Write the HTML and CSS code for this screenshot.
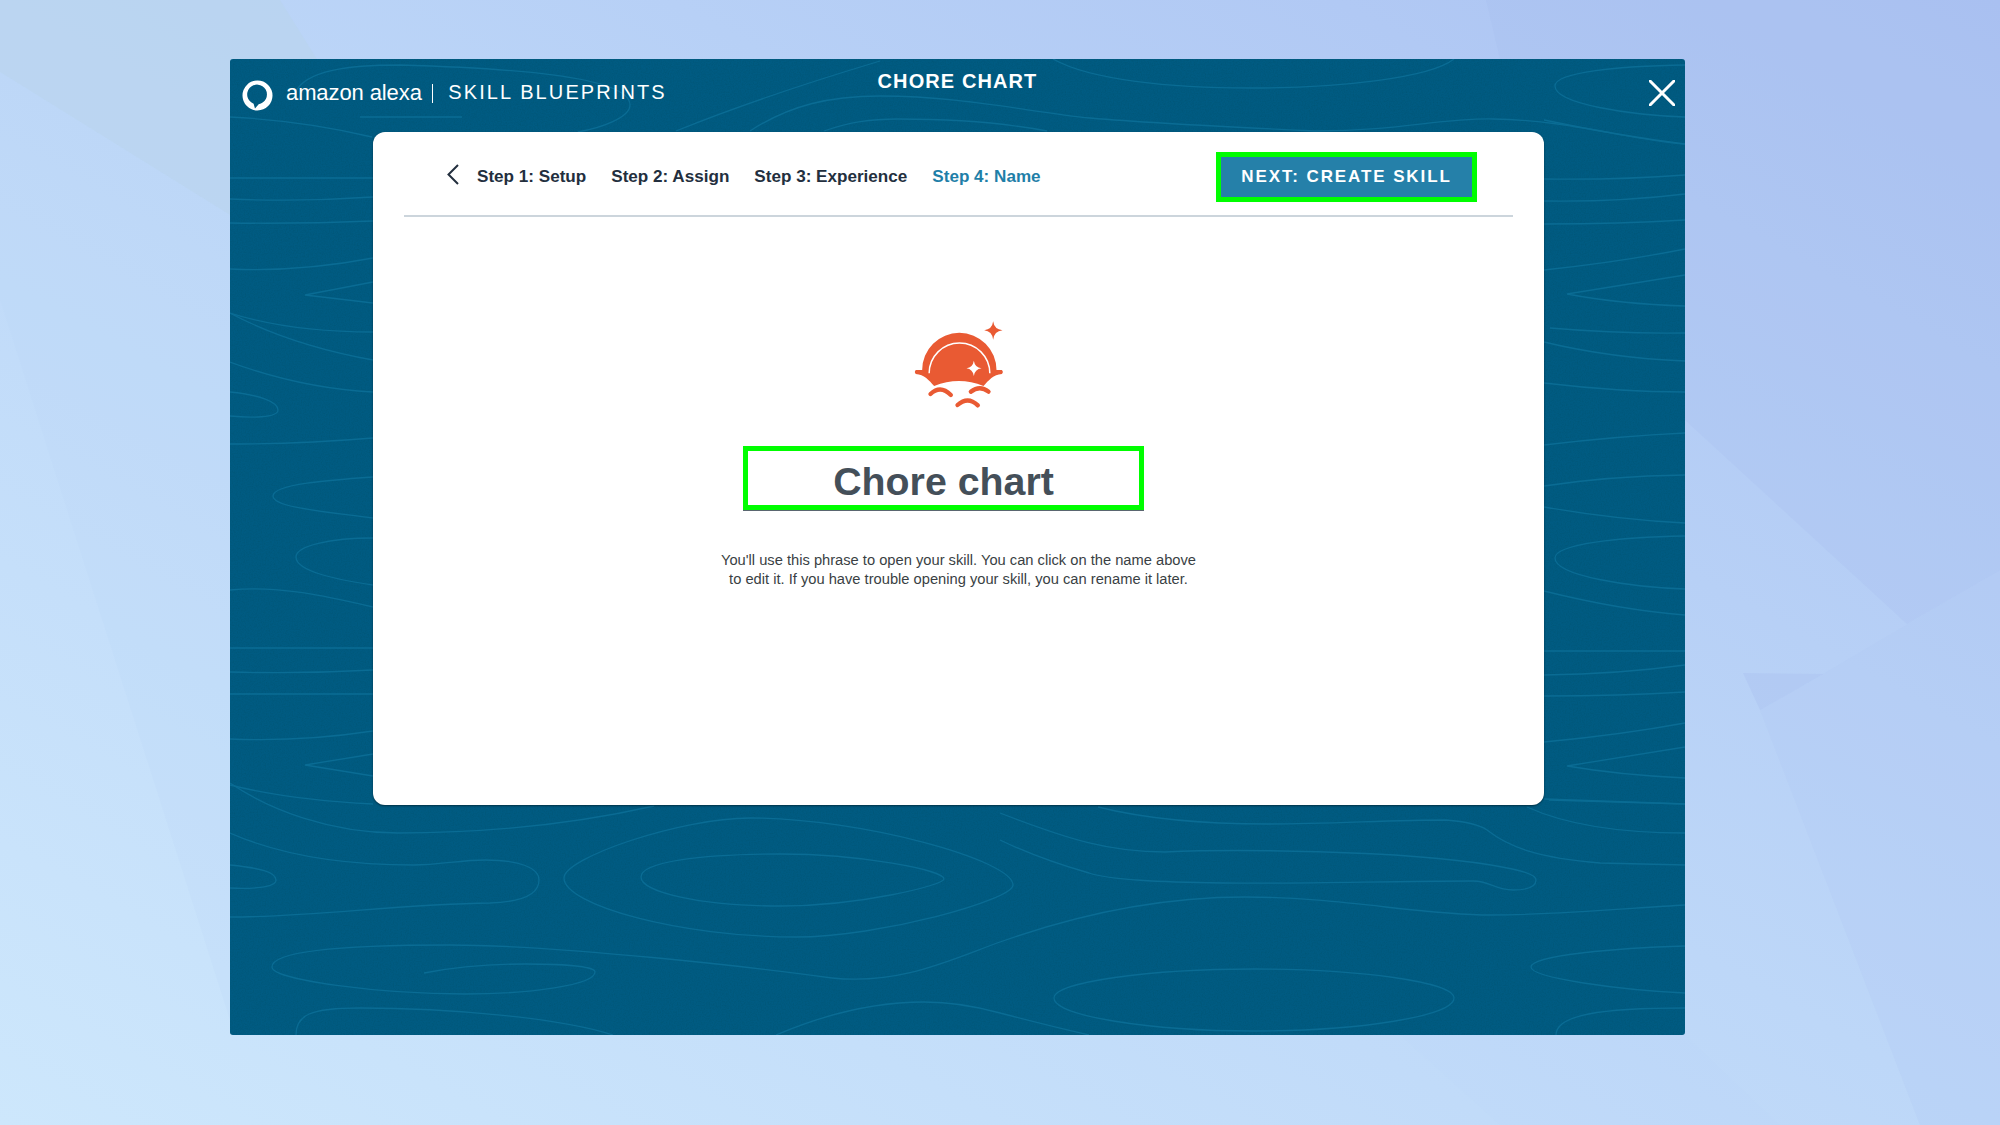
FILE: index.html
```html
<!DOCTYPE html>
<html lang="en">
<head>
    <meta charset="UTF-8">
    <title>Chore Chart - Skill Blueprints</title>
    <link rel="stylesheet" href="styles.css">
</head>
<body>
    <!-- Desktop wallpaper -->
    <svg class="wallpaper" viewBox="0 0 2000 1125" aria-hidden="true">
        <defs>
            <linearGradient id="wallGrad" x1="0" y1="1" x2="1" y2="0">
                <stop offset="0" stop-color="#cde7fc"/>
                <stop offset="0.5" stop-color="#bdd7f8"/>
                <stop offset="1" stop-color="#abc2f2"/>
            </linearGradient>
        </defs>
        <rect width="2000" height="1125" fill="url(#wallGrad)"/>
        <polygon points="0,0 280,0 330,80 300,260 230,215 0,72" fill="#b9d4ec" opacity="0.6"/>
        <polygon points="0,72 230,215 230,1020 0,300" fill="#bcd8f4" opacity="0.22"/>
        <polygon points="1486,0 1500,59 1685,420 1907,624 2000,570 2000,0" fill="#a4bcef" opacity="0.22"/>
        <polygon points="1760,710 1920,1125 2000,1125 2000,570 1823,674" fill="#b0c8f5" opacity="0.25"/>
        <polygon points="1743,673 1823,674 1760,710" fill="#a9c1f1" opacity="0.4"/>
        <polygon points="1680,1030 1780,1125 1500,1125 1400,1035" fill="#bbd4f9" opacity="0.15"/>
    </svg>

    <div class="window">
        <!-- Contour line pattern behind the content -->
        <svg class="contours" viewBox="230 59 1455 976" aria-hidden="true">
            <defs>
                <filter id="grain" x="0" y="0" width="100%" height="100%">
                    <feTurbulence type="fractalNoise" baseFrequency="0.75" numOctaves="2" seed="4"/>
                    <feColorMatrix values="0 0 0 0 0  0 0 0 0 0.08  0 0 0 0 0.14  1.4 0 0 0 -0.55"/>
                </filter>
            </defs>
            <rect x="230" y="59" width="1455" height="976" filter="url(#grain)" opacity="0.5"/>
            <g class="lines">
                <!-- top band -->
                <path d="M295 93 C305 70 350 65 400 65 C500 68 630 75 630 105 C630 118 600 128 578 132"/>
                <path d="M230 117 C290 120 335 128 372 137"/>
                <path d="M360 117 H462"/>
                <path d="M676 131 C740 105 800 85 880 61"/>
                <path d="M750 131 C790 105 830 96 880 96 C960 96 1030 112 1090 118 C1160 124 1250 128 1316 131 C1400 131 1440 118 1493 119 C1570 120 1630 140 1685 144"/>
                <path d="M824 131 C850 122 870 119 898 119 C960 119 1010 124 1047 131"/>
                <path d="M1053 59 C1090 80 1170 88 1251 88 C1340 88 1430 78 1454 59"/>
                <!-- left strip -->
                <path d="M230 178 H373"/>
                <path d="M230 199 Q300 202 373 197"/>
                <path d="M230 223 Q300 224 373 221"/>
                <path d="M230 269 Q300 272 373 258"/>
                <path d="M373 282 L305 295 L373 303"/>
                <path d="M230 313 Q290 332 373 332"/>
                <path d="M230 313 Q290 345 373 360"/>
                <path d="M230 362 Q300 388 373 392"/>
                <path d="M230 392 C260 395 278 402 278 410 C278 418 250 418 230 416"/>
                <path d="M230 444 Q300 444 373 438"/>
                <path d="M373 477 C330 480 273 484 273 496 C273 508 330 512 373 518"/>
                <path d="M373 538 C330 538 296 546 296 557 C296 572 340 580 373 585"/>
                <path d="M230 590 C280 585 330 597 373 607"/>
                <path d="M230 648 H373"/>
                <path d="M230 672 Q300 674 373 670"/>
                <path d="M230 694 H373"/>
                <path d="M230 739 Q300 742 373 731"/>
                <path d="M373 754 L305 765 L373 776"/>
                <path d="M230 785 Q290 800 373 804"/>
                <!-- right strip -->
                <path d="M1685 65 C1620 66 1555 72 1555 86 C1555 104 1630 115 1685 117"/>
                <path d="M1544 120 Q1620 136 1685 144"/>
                <path d="M1544 179 Q1620 180 1685 175"/>
                <path d="M1544 201 Q1620 202 1685 194"/>
                <path d="M1544 224 Q1620 224 1685 220"/>
                <path d="M1544 270 Q1620 262 1685 249"/>
                <path d="M1685 275 L1567 294 Q1620 304 1685 306"/>
                <path d="M1550 328 Q1620 334 1685 333"/>
                <path d="M1544 342 Q1610 358 1685 361"/>
                <path d="M1544 383 Q1620 392 1685 392"/>
                <path d="M1544 445 Q1620 436 1685 433"/>
                <path d="M1544 486 Q1610 476 1685 475"/>
                <path d="M1544 507 Q1620 520 1685 523"/>
                <path d="M1685 536 C1620 537 1555 544 1555 558 C1555 576 1630 587 1685 589"/>
                <path d="M1544 591 Q1620 610 1685 615"/>
                <path d="M1544 651 H1685"/>
                <path d="M1544 675 Q1620 674 1685 665"/>
                <path d="M1544 696 Q1620 696 1685 692"/>
                <path d="M1544 742 Q1620 735 1685 723"/>
                <path d="M1685 747 L1567 766 Q1620 775 1685 778"/>
                <path d="M1544 799 Q1620 802 1685 804"/>
                <!-- bottom area, left -->
                <path d="M230 783 C270 810 330 833 398 833 C480 833 570 825 654 806"/>
                <path d="M230 833 C280 855 340 865 414 865 C440 865 460 860 485 860 C520 860 539 868 539 880 C539 895 520 902 490 903 C400 904 310 917 230 917"/>
                <path d="M230 865 C260 868 276 872 276 880 C276 888 250 889 230 888"/>
                <path d="M564 878 C564 858 680 818 750 818 C860 818 1013 860 1013 885 C1013 900 880 937 796 937 C680 937 564 905 564 878 Z"/>
                <path d="M641 877 C641 862 700 854 781 854 C860 854 944 870 944 879 C944 885 860 906 781 906 C700 906 641 892 641 877 Z"/>
                <path d="M832 978 C760 968 560 945 450 945 C350 945 272 950 272 967 C272 980 380 994 465 994 C530 994 595 985 595 972 C595 966 560 964 526 964 C490 964 450 968 424 973"/>
                <path d="M832 978 C900 985 950 960 1000 942 C1090 910 1170 897 1245 897 C1340 897 1420 915 1491 915 C1560 915 1630 908 1685 905"/>
                <path d="M296 1035 C296 1015 310 1008 360 1008 C450 1008 560 1018 613 1035"/>
                <path d="M776 1035 C830 1012 880 1002 924 1002 C950 1002 975 1006 1000 1013 Q1050 1026 1089 1035"/>
                <!-- bottom area, right -->
                <path d="M1098 807 C1150 820 1210 824 1268 824 C1330 824 1390 820 1446 820 C1470 822 1480 825 1487 830 C1510 848 1540 858 1600 863 L1685 865"/>
                <path d="M1000 813 C1070 840 1110 852 1165 852 C1230 849 1400 850 1491 865 C1520 870 1536 874 1536 880 C1536 888 1525 890 1513 890 C1495 890 1490 881 1473 881 C1390 881 1300 884 1223 883 C1160 882 1110 880 1089 873 C1050 862 1025 852 1000 840"/>
                <path d="M1054 998 C1054 982 1150 969 1254 969 C1360 969 1454 982 1454 998 C1454 1016 1360 1031 1254 1031 C1150 1031 1054 1016 1054 998 Z"/>
                <path d="M1685 946 C1620 948 1531 955 1531 967 C1531 978 1620 990 1685 993"/>
                <path d="M1556 1035 C1556 1015 1600 1008 1685 1008"/>
                <path d="M1549 800 L1685 804"/>
                <path d="M1527 807 C1560 822 1610 833 1685 833"/>
            </g>
        </svg>

        <header class="top-bar">
            <div class="brand">
                <svg class="alexa-ring" viewBox="0 0 32 32" aria-hidden="true">
                    <path fill-rule="evenodd" d="M16 .5a15.500 15.500 0 1 1 0 31 15.500 15.500 0 0 1 0-31zM13.400 29.300L12 24.500A10.200 10.200 0 1 1 17.200 25z"/>
                </svg>
                <span class="brand-name">amazon alexa</span>
                <span class="brand-sep"></span>
                <span class="brand-product">SKILL BLUEPRINTS</span>
            </div>
            <div class="page-title">CHORE CHART</div>
            <svg class="close-icon" viewBox="0 0 26 26" aria-hidden="true">
                <path d="M1 1 L25 25 M25 1 L1 25"/>
            </svg>
        </header>

        <section class="card">
            <nav class="steps">
                <svg class="back-icon" viewBox="0 0 12 21" aria-hidden="true">
                    <path d="M11 1 L1.500 10.500 L11 20"/>
                </svg>
                <a class="step">Step 1: Setup</a>
                <a class="step">Step 2: Assign</a>
                <a class="step">Step 3: Experience</a>
                <a class="step active">Step 4: Name</a>
                <button class="next-button">NEXT: CREATE SKILL</button>
            </nav>

            <div class="name-panel">
                <svg class="sun-icon" viewBox="-4.500 0 420 330" aria-hidden="true">
                    <path class="sun-fill" d="M76 180 H95 A111.500 111.500 0 0 1 318 180 H334 Q340 186 334 192 C309 194 294 211 279 228 Q205 198 131 228 C116 211 101 194 76 192 Q70 186 76 180 Z"/>
                    <path class="sun-gap" d="M116 190 A91 91 0 0 1 298 190"/>
                    <path class="sun-wave" d="M120 252 Q150 224 181 255"/>
                    <path class="sun-wave" d="M241 245 Q268 224 294 245"/>
                    <path class="sun-wave" d="M201 285 Q232 257 262 286"/>
                    <path class="sun-fill" d="M308 34 Q311 58 336 61 Q311 64 308 89 Q305 64 281 61 Q305 58 308 34 Z"/>
                    <path class="sun-spark" d="M250 152 Q253 172 273 175 Q253 178 250 198 Q247 178 228 175 Q247 172 250 152 Z"/>
                </svg>
                <h1 class="skill-name">Chore chart</h1>
                <p class="hint">You'll use this phrase to open your skill. You can click on the name above<br>to edit it. If you have trouble opening your skill, you can rename it later.</p>
            </div>
        </section>
    </div>
</body>
</html>
```

FILE: styles.css
```css
/* Page and wallpaper */
html, body {
    height: 100%;
    margin: 0;
    overflow: hidden;
}
body {
    padding: 59px 0 0 230px;
    box-sizing: border-box;
    font-family: "Liberation Sans", Arial, sans-serif;
    background-color: #bfd9f8;
}
.wallpaper {
    position: absolute;
    left: 0;
    top: 0;
    width: 2000px;
    height: 1125px;
}

/* Blueprint window */
.window {
    position: relative;
    width: 1455px;
    height: 976px;
    border-radius: 3px;
    background-color: #005b82;
    overflow: hidden;
}
.contours {
    position: absolute;
    left: 0;
    top: 0;
    width: 100%;
    height: 100%;
}
.lines path {
    fill: none;
    stroke: #0a6c94;
    stroke-width: 1.3;
}

/* Top bar */
.top-bar {
    position: relative;
    display: grid;
    grid-template-columns: 1fr auto 1fr;
    height: 73px;
    color: #ffffff;
}
.brand {
    display: flex;
    align-items: center;
    padding: 0 0 0 12px;
}
.alexa-ring {
    width: 31px;
    height: 31px;
    margin-right: 13px;
    fill: #ffffff;
}
.brand-name {
    margin-top: -6px;
    font-size: 22px;
    letter-spacing: -0.1px;
}
.brand-sep {
    width: 1.5px;
    height: 19px;
    margin: -5px 15px 0 10px;
    background-color: #ffffff;
}
.brand-product {
    margin-top: -6px;
    font-size: 20px;
    letter-spacing: 2.1px;
    white-space: nowrap;
}
.page-title {
    padding-top: 11px;
    font-size: 20px;
    font-weight: bold;
    letter-spacing: 1.1px;
}
.close-icon {
    justify-self: end;
    width: 26px;
    height: 26px;
    margin: 21px 10px 0 0;
    fill: none;
    stroke: #ffffff;
    stroke-width: 3;
    stroke-linecap: round;
}

/* White card */
.card {
    position: relative;
    width: 1171px;
    height: 673px;
    margin-left: 143px;
    padding: 0 31px;
    box-sizing: border-box;
    background-color: #ffffff;
    border-radius: 12px;
    box-shadow: 0 1px 2px rgba(0, 0, 0, 0.45);
}
.steps {
    display: flex;
    align-items: center;
    gap: 25px;
    height: 85px;
    padding: 7px 36px 0 43px;
    box-sizing: border-box;
    border-bottom: 2px solid #ccd5dc;
}
.back-icon {
    width: 12px;
    height: 21px;
    margin: -5px -7px 0 0;
    fill: none;
    stroke: #232f3e;
    stroke-width: 2;
}
.step {
    font-size: 17.100px;
    font-weight: bold;
    color: #232f3e;
}
.step.active {
    color: #1f7fa8;
}
.next-button {
    width: 261px;
    height: 50px;
    margin-left: auto;
    padding: 0;
    border: 5px solid #00fe00;
    background-color: #2580a9;
    color: #ffffff;
    font-family: inherit;
    font-size: 17px;
    font-weight: bold;
    letter-spacing: 1.900px;
}

/* Name panel */
.name-panel {
    display: flex;
    flex-direction: column;
    align-items: center;
    padding-top: 93px;
}
.sun-icon {
    width: 140px;
    height: 110px;
}
.sun-fill {
    fill: #e95a33;
}
.sun-gap {
    fill: none;
    stroke: #ffffff;
    stroke-width: 4.500;
}
.sun-wave {
    fill: none;
    stroke: #e95a33;
    stroke-width: 13;
    stroke-linecap: round;
}
.sun-spark {
    fill: #ffffff;
}
.skill-name {
    width: 401px;
    height: 64px;
    box-sizing: border-box;
    margin: 26px 30px 0 0;
    border: 5px solid #00fe00;
    box-shadow: 0 1px 0 #5a6670;
    color: #444f59;
    font-size: 39.300px;
    line-height: 60px;
    text-align: center;
}
.hint {
    margin: 41px 0 0;
    color: #3a3f44;
    font-size: 14.700px;
    line-height: 18.500px;
    text-align: center;
}
```
